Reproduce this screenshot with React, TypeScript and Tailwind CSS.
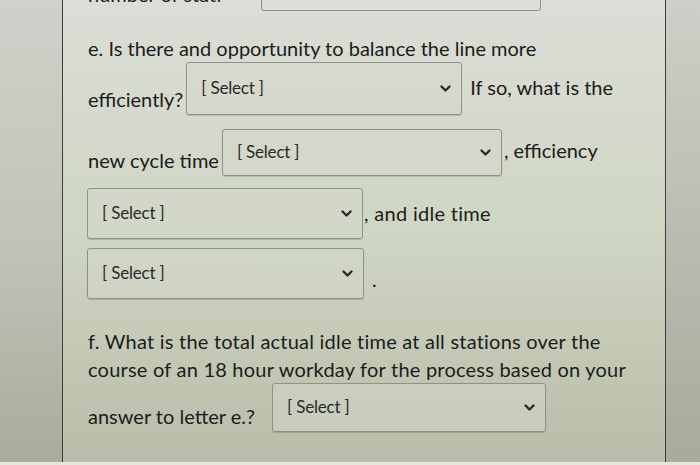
import React from "react";

function Chevron() {
  return (
    <svg width="11" height="8" viewBox="0 0 11 8" className="shrink-0">
      <path d="M1.5 1.5 L5.5 5.5 L9.5 1.5" fill="none" stroke="#2a2a2a" strokeWidth="2.4" strokeLinecap="round" strokeLinejoin="round" />
    </svg>
  );
}

function Sel({ w, h = 50, className = "" }: { w: number; h?: number; className?: string }) {
  return (
    <div
      className={`flex shrink-0 items-center justify-between rounded-[3px] border border-[#8f9289] bg-[#d3d7cb]/50 pl-[14px] pr-[10px] shadow-[0_1px_1px_rgba(0,0,0,0.15)] ${className}`}
      style={{ width: w, height: h }}
    >
      <span className="-mt-[3px] text-[17px] leading-none tracking-[-0.2px] text-[#2a2a2a] [font-family:Lato,'Liberation_Sans',sans-serif]">[ Select ]</span>
      <Chevron />
    </div>
  );
}

export default function App() {
  return (
    <div className="h-[465px] w-[700px] overflow-hidden bg-gradient-to-b from-[#d1d0cb] via-[#c2c4b8] to-[#a9ac9c] [font-family:Lato,'Liberation_Sans',sans-serif] text-[20px] text-[#1c1c1c]">
      <div className="flex h-[462px]">
        <div className="w-[62px] shrink-0" />
        <div className="relative h-full w-[604px] border-x border-[#3d3d3a] bg-gradient-to-b from-[#dcddd7] via-[#cfd6c3] to-[#b9bda9]">
          {/* cut-off top row */}
          <div className="flex h-[11px] items-end">
            <div className="ml-[25px] h-[6px] overflow-hidden self-start">
              <div className="-mt-[18px] leading-[24px]">number of stati</div>
            </div>
            <div className="ml-auto mr-[124px] h-[30px] w-[280px] self-end rounded-[3px] border border-[#8f9289]" />
          </div>

          <div className="mt-[25px] pl-[25px] leading-[24px]">e. Is there and opportunity to balance the line more</div>

          <div className="mt-[2px] flex items-center pl-[25px]">
            <span className="mt-[20px]">efficiently?</span>
            <Sel w={276} h={53} className="ml-[3px]" />
            <span className="ml-[8px] -mt-[4px]">If so, what is the</span>
          </div>

          <div className="mt-[14px] flex items-center pl-[25px]">
            <span className="mt-[14px]">new cycle time</span>
            <Sel w={280} h={47} className="ml-[3px]" />
            <span className="ml-[2px] -mt-[6px]">, efficiency</span>
          </div>

          <div className="mt-[12px] flex items-center pl-[24px]">
            <Sel w={276} h={51} />
            <span className="ml-[1px] -mt-[2px] tracking-[0.3px]">, and idle time</span>
          </div>

          <div className="mt-[9px] flex items-center pl-[24px]">
            <Sel w={277} h={51} />
            <span className="ml-[8px] mt-[10px]">.</span>
          </div>

          <div className="mt-[28px] pl-[25px] leading-[28px] tracking-[0.22px]">
            <div>f. What is the total actual idle time at all stations over the</div>
            <div>course of an 18 hour workday for the process based on your</div>
          </div>

          <div className="mt-[0px] flex items-center pl-[25px]">
            <span className="mt-[16px]">answer to letter e.?</span>
            <Sel w={274} h={49} className="ml-[17px]" />
          </div>
        </div>
        <div className="flex-1 bg-gradient-to-b from-[#cfcec8] to-[#a8ab9b]" />
      </div>
      <div className="h-[3px] bg-[#e6e8e0]" />
    </div>
  );
}
